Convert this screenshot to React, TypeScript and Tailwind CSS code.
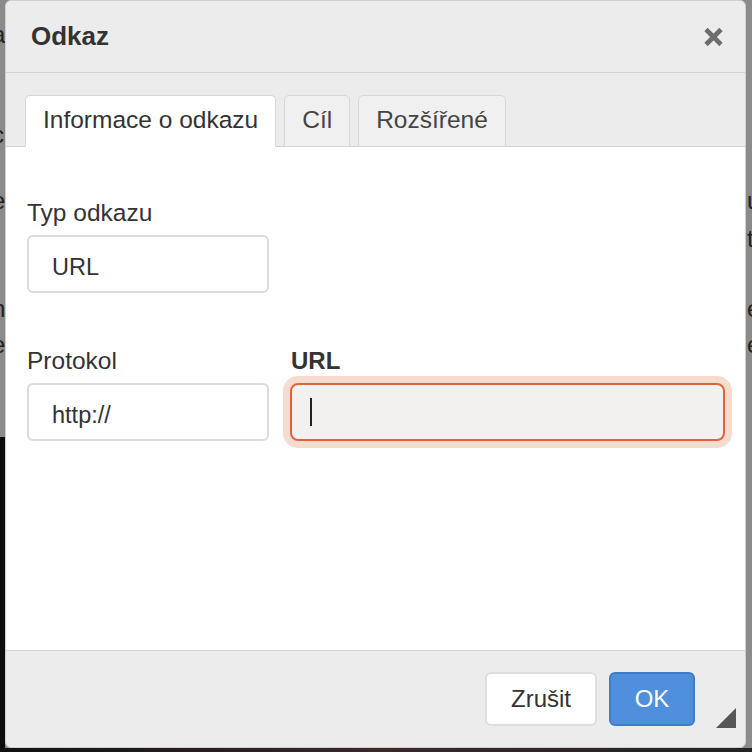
import React from "react";

const tabs = ["Informace o odkazu", "Cíl", "Rozšířené"];

// slivers of the page text that peek out behind the modal overlay
const leftBits = [
  { ch: "a", top: 22 },
  { ch: "c", top: 122 },
  { ch: "e", top: 188 },
  { ch: "l", top: 226 },
  { ch: "n", top: 296 },
  { ch: "e", top: 332 },
  { ch: "t", top: 370 },
];
const rightBits = [
  { ch: "u", top: 188 },
  { ch: "t", top: 226 },
  { ch: "e", top: 296 },
  { ch: "e", top: 332 },
];

const Field = ({ label, value, bold }: { label: string; value: string; bold?: boolean }) => (
  <div className="flex flex-col">
    <label className={`text-[24.5px] leading-[26px] text-[#333] ${bold ? "font-bold" : ""}`}>{label}</label>
    <div className="mt-[9px] flex h-[58px] w-[242px] items-center rounded-[6px] border-2 border-[#dcdcdc] bg-white pl-[23px] pt-[8px] text-[23.5px] text-[#333]">
      {value}
    </div>
  </div>
);

const App: React.FC = () => {
  return (
    <div className="relative h-[752px] w-[752px] overflow-hidden bg-[#8b8b8b] font-['Liberation_Sans',Arial,sans-serif]">
      {leftBits.map((b, i) => (
        <span key={"l" + i} className="absolute left-[-8px] text-[24px] leading-[26px] text-[#222]" style={{ top: b.top }}>
          {b.ch}
        </span>
      ))}
      {rightBits.map((b, i) => (
        <span key={"r" + i} className="absolute left-[747px] text-[24px] leading-[26px] text-[#222]" style={{ top: b.top }}>
          {b.ch}
        </span>
      ))}
      <div className="absolute left-0 top-[437px] h-[315px] w-[5px] bg-[#0d0d0d]" />
      <div className="absolute bottom-0 left-0 h-[4px] w-[752px] bg-gradient-to-r from-[#111] via-[#3a2a2a] to-[#222]" />

      <div className="absolute left-[5px] top-0 flex h-[748px] w-[741px] flex-col overflow-hidden rounded-[6px] border border-[#cfcfcf] bg-[#ececec]">
        <div className="flex h-[72px] shrink-0 items-center justify-between border-b border-[#d4d4d4] pl-[25px] pr-[21px]">
          <h1 className="text-[26px] font-bold text-[#333]">Odkaz</h1>
          <svg width="21" height="20" viewBox="0 0 21 20">
            <path d="M3 2.5 L18 17.5 M18 2.5 L3 17.5" stroke="#6d6d6d" strokeWidth="4.6" strokeLinecap="butt" />
          </svg>
        </div>

        <div className="flex h-[74px] shrink-0 items-end gap-[8px] border-b border-[#d1d1d1] pl-[19px]">
          {tabs.map((t, i) => (
            <div
              key={t}
              className={`mb-[-1px] flex h-[52px] items-center rounded-t-[5px] border border-[#d6d6d6] px-[17px] pb-[2px] text-[24.5px] ${
                i === 0 ? "border-b-white bg-white text-[#333]" : "bg-[#f0f0f0] text-[#444]"
              }`}
            >
              {t}
            </div>
          ))}
        </div>

        <div className="flex-1 bg-white pl-[21px] pt-[53px]">
          <Field label="Typ odkazu" value="URL" />
          <div className="mt-[55px] flex gap-[21px]">
            <Field label="Protokol" value="http://" />
            <div className="flex flex-col">
              <label className="pl-[1px] text-[24px] font-bold leading-[26px] text-[#333]">URL</label>
              <div className="mt-[9px] flex h-[58px] w-[435px] items-center rounded-[8px] border-2 border-[#e0643a] bg-[#f2f1ef] pl-[18px] shadow-[0_0_0_7px_#f6dbcf]">
                <span className="h-[28px] w-[2px] bg-[#222]" />
              </div>
            </div>
          </div>
        </div>

        <div className="relative flex h-[97px] shrink-0 items-start justify-end gap-[12px] border-t border-[#d4d4d4] pr-[50px] pt-[21px]">
          <button className="flex h-[54px] w-[112px] items-center justify-center rounded-[6px] border-2 border-[#dedede] bg-white text-[24px] text-[#333]">
            Zrušit
          </button>
          <button className="flex h-[54px] w-[86px] items-center justify-center rounded-[6px] border-2 border-[#3d7cc9] bg-[#4f8fdb] text-[24px] text-white">
            OK
          </button>
          <svg className="absolute bottom-[19px] right-[9px]" width="20" height="20" viewBox="0 0 20 20">
            <path d="M20 0 L20 20 L0 20 Z" fill="#555" />
          </svg>
        </div>
      </div>
    </div>
  );
};

export default App;
